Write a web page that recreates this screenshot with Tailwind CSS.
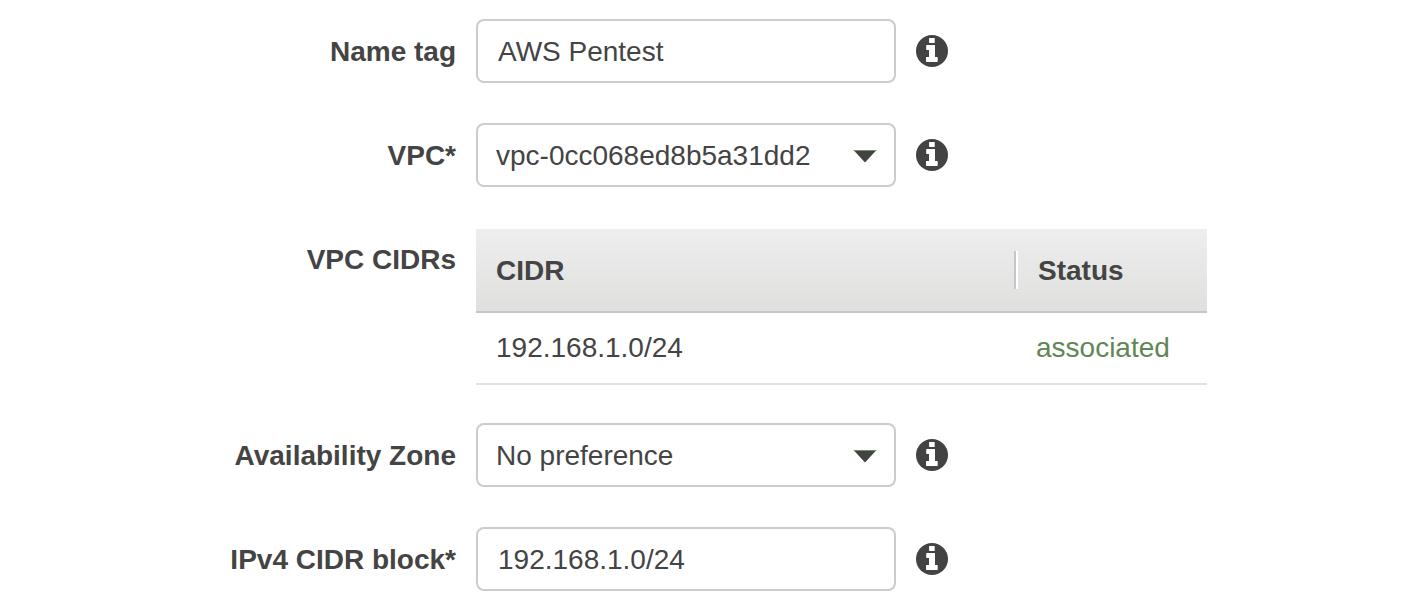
<!DOCTYPE html>
<html lang="en">
<head>
<meta charset="utf-8">
<meta name="viewport" content="width=device-width, initial-scale=1">
<title>Create subnet</title>
<script src="https://cdn.jsdelivr.net/npm/@tailwindcss/browser@4"></script>
</head>
<body class="bg-white font-['Liberation_Sans',Arial,sans-serif] text-[28px] leading-8 text-[#444444]">
<svg class="hidden" aria-hidden="true">
  <symbol id="info" viewBox="0 0 32 32">
    <circle cx="16" cy="16" r="16" fill="#444344"/>
    <path fill="#fff" d="M13.4 3h5l.3.3v4.4l-.3.3h-5l-.3-.3V3.300zM10.700 10h8l.3.3V22h2.200l.5.5v4l-.5.5H10.500l-.5-.5v-4l.5-.5H13v-7h-2.300l-.5-.5v-4z"/>
  </symbol>
  <symbol id="caret" viewBox="0 0 24 13">
    <path fill="#444344" d="M.5 0h23L12 12.500z"/>
    <path fill="#6f8f60" d="M.5 0h23l-1 1h-21z"/>
  </symbol>
</svg>
<form class="flex flex-col gap-10 pt-[19px] pb-6 pr-6">
  <div class="grid grid-cols-[456px_1fr] gap-5">
    <label for="name" class="pt-[17px] text-right font-bold">Name tag</label>
    <div class="flex items-center gap-5">
      <input id="name" type="text" value="AWS Pentest" class="h-16 w-full max-w-[420px] rounded-lg border-2 border-[#cccccc] bg-white px-5 pt-0.5 outline-none">
      <button type="button" aria-label="About the name tag" class="shrink-0"><svg class="size-8"><use href="#info"/></svg></button>
    </div>
  </div>
  <div class="grid grid-cols-[456px_1fr] gap-5">
    <label for="vpc" class="pt-[17px] text-right font-bold">VPC*</label>
    <div class="flex items-center gap-5">
      <div class="relative w-full max-w-[420px]">
        <select id="vpc" class="h-16 w-full appearance-none rounded-lg border-2 border-[#cccccc] bg-white pt-0.5 pr-14 pl-[18px] outline-none"><option>vpc-0cc068ed8b5a31dd2</option></select>
        <svg class="pointer-events-none absolute top-[27px] right-[19px] h-[13px] w-6"><use href="#caret"/></svg>
      </div>
      <button type="button" aria-label="About the VPC" class="shrink-0"><svg class="size-8"><use href="#info"/></svg></button>
    </div>
  </div>
  <div class="-mb-0.5 grid grid-cols-[456px_1fr] gap-5">
    <div id="cidrs" class="pt-[17px] text-right font-bold">VPC CIDRs</div>
    <div class="pt-0.5">
      <table aria-labelledby="cidrs" class="w-full max-w-[731px] table-fixed border-separate border-spacing-0 text-left">
        <thead>
          <tr class="bg-linear-to-b from-[#eeeeee] to-[#dfdfde]">
            <th scope="col" class="h-[84px] border-b-2 border-[#c6c6c6] p-0"><div class="flex h-[38px] items-center border-r-2 border-[#c6c6c6] pt-0.5 pl-5">CIDR</div></th>
            <th scope="col" class="h-[84px] w-[191px] border-b-2 border-[#c6c6c6] p-0"><div class="flex h-[38px] items-center border-l-2 border-white pt-0.5 pl-5">Status</div></th>
          </tr>
        </thead>
        <tbody>
          <tr>
            <td class="h-[72px] border-b-2 border-[#e2e2e2] py-0 pl-5">192.168.1.0/24</td>
            <td class="h-[72px] border-b-2 border-[#e2e2e2] py-0 pl-5 text-[#5f8755]">associated</td>
          </tr>
        </tbody>
      </table>
    </div>
  </div>
  <div class="grid grid-cols-[456px_1fr] gap-5">
    <label for="zone" class="pt-[17px] text-right font-bold">Availability Zone</label>
    <div class="flex items-center gap-5">
      <div class="relative w-full max-w-[420px]">
        <select id="zone" class="h-16 w-full appearance-none rounded-lg border-2 border-[#cccccc] bg-white pt-0.5 pr-14 pl-[18px] outline-none"><option>No preference</option></select>
        <svg class="pointer-events-none absolute top-[27px] right-[19px] h-[13px] w-6"><use href="#caret"/></svg>
      </div>
      <button type="button" aria-label="About the Availability Zone" class="shrink-0"><svg class="size-8"><use href="#info"/></svg></button>
    </div>
  </div>
  <div class="grid grid-cols-[456px_1fr] gap-5">
    <label for="block" class="pt-[17px] text-right font-bold">IPv4 CIDR block*</label>
    <div class="flex items-center gap-5">
      <input id="block" type="text" value="192.168.1.0/24" class="h-16 w-full max-w-[420px] rounded-lg border-2 border-[#cccccc] bg-white px-5 pt-0.5 outline-none">
      <button type="button" aria-label="About the IPv4 CIDR block" class="shrink-0"><svg class="size-8"><use href="#info"/></svg></button>
    </div>
  </div>
</form>
</body>
</html>
